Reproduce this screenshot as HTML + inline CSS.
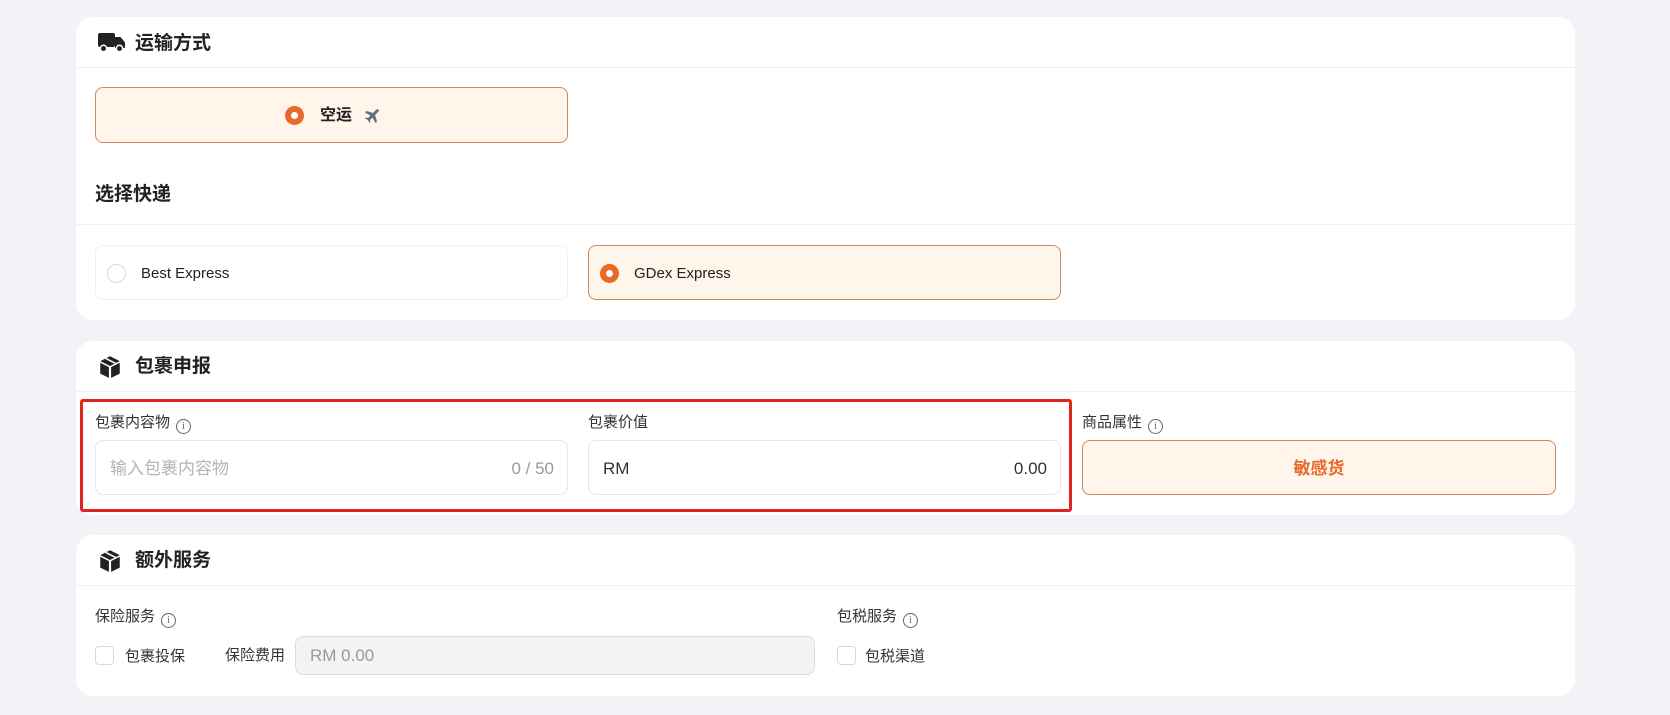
<!DOCTYPE html>
<html><head><meta charset="utf-8"><style>
*{box-sizing:border-box;margin:0;padding:0}
body{width:1670px;height:715px;background:#f2f3f6;font-family:"Liberation Sans","Noto Sans CJK SC",sans-serif;color:#222;position:relative;overflow:hidden}
.card{position:absolute;left:76px;width:1499px;background:#fff;border-radius:17px}
.abs{position:absolute}
.sep{position:absolute;left:0;right:0;height:1px;background:#f0f0f0}
.h{position:absolute;font-size:19px;font-weight:bold;color:#222;line-height:24px}
.box{position:absolute;border-radius:8px;border:1px solid #e6e6e6;background:#fff}
.sel{background:#fff5eb;border-color:#c98a62}
.radio{position:absolute;width:19px;height:19px;border-radius:50%;background:#e8692a}
.radio::after{content:"";position:absolute;left:6px;top:6px;width:7px;height:7px;border-radius:50%;background:#fff}
.rad0{position:absolute;width:19px;height:19px;border-radius:50%;border:1px solid #d8d8d8;background:#fff}
.lbl{position:absolute;font-size:15px;color:#333;line-height:20px;white-space:nowrap}
.info{display:inline-block;width:15px;height:15px;border:1px solid #666;border-radius:50%;font-size:10px;line-height:13px;text-align:center;color:#666;margin-left:6px;vertical-align:-2px;font-family:"Liberation Serif",serif}
.t{position:absolute;line-height:20px;white-space:nowrap}
.cb{position:absolute;width:19px;height:19px;border:1px solid #d8d8d8;border-radius:4px;background:#fff}
</style></head><body>

<div class="card" style="top:17px;height:303px">
  <svg class="abs" style="left:22px;top:15px" width="28" height="22" viewBox="0 0 28 22"><rect x="0" y="1" width="17" height="14" rx="2" fill="#222"/><path d="M17 5h5.5l4.5 5.5V16H17z" fill="#222"/><circle cx="5.5" cy="16.5" r="3.2" fill="#222" stroke="#fff" stroke-width="1.5"/><circle cx="21.5" cy="16.5" r="3.2" fill="#222" stroke="#fff" stroke-width="1.5"/></svg>
  <div class="h" style="left:59px;top:15px">运输方式</div>
  <div class="sep" style="top:50px"></div>
  <div class="box sel" style="left:19px;top:70px;width:473px;height:56px">
    <div class="radio" style="left:189px;top:18px"></div>
    <div class="t" style="left:224px;top:18px;font-size:16px;font-weight:bold">空运</div>
    <svg class="abs" style="left:268px;top:20px" width="16" height="16" viewBox="0 0 16 16"><path d="M14.5 1.5c-.8-.8-2 0-3 1L9 5 2.5 3 1 4.5l5.5 3-2.5 2.5-2-.5L1 10.5l3 1.5 1.5 3 1-1-.5-2 2.5-2.5 3 5.5 1.5-1.5L11 7l2.5-2.5c1-1 1.8-2.2 1-3z" fill="#666d7a"/></svg>
  </div>
  <div class="h" style="left:19px;top:166px">选择快递</div>
  <div class="sep" style="top:207px"></div>
  <div class="box" style="left:19px;top:228px;width:473px;height:55px;border-color:#f0f0f0">
    <div class="rad0" style="left:11px;top:18px"></div>
    <div class="t" style="left:45px;top:18px;font-size:15px">Best Express</div>
  </div>
  <div class="box sel" style="left:512px;top:228px;width:473px;height:55px">
    <div class="radio" style="left:11px;top:18px"></div>
    <div class="t" style="left:45px;top:18px;font-size:15px">GDex Express</div>
  </div>
</div>

<div class="card" style="top:341px;height:174px">
  <svg class="abs" style="left:21px;top:12px" width="26" height="26" viewBox="0 0 24 24"><path d="M12 3l9 4.5-9 4.5-9-4.5z" fill="#222"/><path d="M3 9l8 4v10l-8-4z" fill="#222"/><path d="M21 9l-8 4v10l8-4z" fill="#222"/><path d="M8 5l9 4.5" stroke="#fff" stroke-width="1.5"/></svg>
  <div class="h" style="left:59px;top:14px">包裹申报</div>
  <div class="sep" style="top:50px"></div>
  <div class="lbl" style="left:19px;top:72px">包裹内容物<span class="info">i</span></div>
  <div class="box" style="left:19px;top:99px;width:473px;height:55px">
    <div class="t" style="left:14px;top:18px;font-size:17px;color:#b5b5b5">输入包裹内容物</div>
    <div class="t" style="right:13px;top:18px;font-size:17px;color:#999">0 / 50</div>
  </div>
  <div class="lbl" style="left:512px;top:72px">包裹价值</div>
  <div class="box" style="left:512px;top:99px;width:473px;height:55px">
    <div class="t" style="left:14px;top:18px;font-size:17px;color:#333">RM</div>
    <div class="t" style="right:13px;top:18px;font-size:17px;color:#333">0.00</div>
  </div>
  <div class="lbl" style="left:1006px;top:72px">商品属性<span class="info">i</span></div>
  <div class="box sel" style="left:1006px;top:99px;width:474px;height:55px">
    <div class="t" style="left:0;right:0;text-align:center;top:18px;font-size:17px;font-weight:bold;color:#e8692a">敏感货</div>
  </div>
</div>
<div class="abs" style="left:80px;top:399px;width:992px;height:113px;border:3px solid #e0231e;border-radius:3px"></div>

<div class="card" style="top:535px;height:161px">
  <svg class="abs" style="left:21px;top:12px" width="26" height="26" viewBox="0 0 24 24"><path d="M12 3l9 4.5-9 4.5-9-4.5z" fill="#222"/><path d="M3 9l8 4v10l-8-4z" fill="#222"/><path d="M21 9l-8 4v10l8-4z" fill="#222"/><path d="M8 5l9 4.5" stroke="#fff" stroke-width="1.5"/></svg>
  <div class="h" style="left:59px;top:14px">额外服务</div>
  <div class="sep" style="top:50px"></div>
  <div class="lbl" style="left:19px;top:72px">保险服务<span class="info">i</span></div>
  <div class="cb" style="left:19px;top:111px"></div>
  <div class="lbl" style="left:49px;top:112px">包裹投保</div>
  <div class="lbl" style="left:149px;top:111px">保险费用</div>
  <div class="box" style="left:219px;top:101px;width:520px;height:39px;background:#f2f3f5;border-color:#dcdcdc">
    <div class="t" style="left:14px;top:9px;font-size:17px;color:#999">RM 0.00</div>
  </div>
  <div class="lbl" style="left:761px;top:72px">包税服务<span class="info">i</span></div>
  <div class="cb" style="left:761px;top:111px"></div>
  <div class="lbl" style="left:789px;top:112px">包税渠道</div>
</div>
</body></html>
